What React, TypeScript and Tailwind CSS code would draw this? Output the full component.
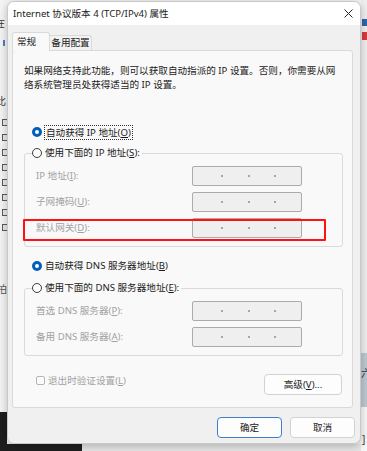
import React from 'react';

const dimText = 'text-[#a2a2a2]';

const Radio = ({ checked }: { checked?: boolean }) =>
  checked ? (
    <span className="flex h-[10px] w-[10px] shrink-0 items-center justify-center rounded-full bg-[#005fb8]">
      <span className="h-[4px] w-[4px] rounded-full bg-white" />
    </span>
  ) : (
    <span className="h-[10px] w-[10px] shrink-0 rounded-full border border-[#3c3c3c] bg-[#fdfdfd]" />
  );

const IpBox = () => (
  <div className="flex h-[20px] w-[110px] items-center justify-evenly rounded-[2px] border border-[#ababab] bg-[#efefef] pl-[3px]">
    <span className="h-[2px] w-[2px] rounded-full bg-[#8c8c8c]" />
    <span className="h-[2px] w-[2px] rounded-full bg-[#8c8c8c]" />
    <span className="h-[2px] w-[2px] rounded-full bg-[#8c8c8c]" />
  </div>
);

const FieldRow = ({ label }: { label: React.ReactNode }) => (
  <div className="flex h-[20px] items-center">
    <span className={`w-[156px] ${dimText}`}>{label}</span>
    <IpBox />
  </div>
);

const Backdrop = () => (
  <>
    {/* left window sliver */}
    <div className="absolute left-0 top-0 h-full w-[7px] overflow-hidden bg-[#f4f4f4]">
      <span className="absolute left-[-5px] top-[16px] text-[10px] text-[#333]">在</span>
      <span className="absolute left-[3px] top-[40px] h-[6px] w-[2px] bg-[#4a7fc0]" />
      <span className="absolute left-[-4px] top-[94px] text-[10px] text-[#333]">比</span>
      <div className="absolute left-[2px] top-[119px] flex flex-col gap-[8px]">
        {[0, 1, 2, 3, 4, 5, 6, 7].map((i) => (
          <span key={i} className="h-[7px] w-[6px] border border-[#5a5a5a] bg-[#e8e8e8]" />
        ))}
      </div>
      <span className="absolute left-[-3px] top-[282px] text-[10px] text-[#555]">拍</span>
      <div className="absolute left-0 top-[412px] h-[40px] w-full bg-[#1e1e1e]" />
    </div>
    {/* bottom strip under the dialog */}
    <div className="absolute bottom-0 left-0 h-[7px] w-[82px] bg-[#1e1e1e]" />
    <div className="absolute bottom-0 left-[82px] h-[7px] w-[285px] bg-[#e6e6e6]" />
    {/* right window sliver */}
    <div className="absolute right-0 top-0 h-full w-[6px] overflow-hidden bg-[#efefef]">
      <span className="absolute left-[1px] top-[19px] h-[7px] w-[5px] bg-[#2b66b0]" />
      <span className="absolute left-[1px] top-[32px] h-[8px] w-[5px] bg-[#d63b3b]" />
      <div className="absolute left-0 top-[353px] h-[54px] w-full bg-[#bcc8d0]" />
      <span className="absolute left-[0px] top-[366px] text-[10px] text-[#333]">六</span>
      <div className="absolute left-0 top-[407px] h-[44px] w-full bg-[#f7f7f7]" />
      <span className="absolute left-[1px] top-[432px] text-[10px] text-[#444]">]</span>
    </div>
  </>
);

export default function App() {
  return (
    <div className="relative h-[451px] w-[367px] overflow-hidden bg-[#f4f4f4] font-['Noto_Sans','Noto_Sans_CJK_SC',sans-serif] text-[9.6px] leading-[14px] text-[#1b1b1b]">
      <Backdrop />

      <div className="relative ml-[7px] mt-[1px] flex h-[443px] w-[354px] flex-col overflow-hidden rounded-[7px] border border-[#c9c9c9] bg-[#f0f0f0] shadow-[0_2px_8px_rgba(0,0,0,0.25)]">
        {/* title bar */}
        <div className="flex h-[23px] items-center justify-between bg-white pl-[5px] pr-[7px]">
          <span>Internet 协议版本 4 (TCP/IPv4) 属性</span>
          <svg width="9" height="9" viewBox="0 0 9 9" className="text-[#222]">
            <path d="M0.5 0.5 L8.5 8.5 M8.5 0.5 L0.5 8.5" stroke="currentColor" strokeWidth="1" />
          </svg>
        </div>

        {/* tabs */}
        <div className="flex h-[25px] items-end pl-[4px]">
          <div className="relative z-10 flex h-[19px] w-[38px] translate-y-[1px] items-center rounded-t-[3px] border border-b-0 border-[#d9d9d9] bg-[#f9f9f9] pl-[4px]">
            常规
          </div>
          <div className="flex h-[15px] w-[42px] items-center justify-center rounded-tr-[3px] border-r border-t border-[#d9d9d9] bg-[#f2f2f2]">
            备用配置
          </div>
        </div>

        {/* panel */}
        <div className="ml-[4px] flex h-[358px] w-[341px] flex-col rounded-[3px] border border-[#d9d9d9] bg-[#f9f9f9]">
          <p className="mt-[13px] whitespace-nowrap pl-[11px]">
            如果网络支持此功能，则可以获取自动指派的 IP 设置。否则，你需要从网
            <br />
            络系统管理员处获得适当的 IP 设置。
          </p>

          <div className="mt-[32px] flex h-[16px] items-center pl-[19px]">
            <Radio checked />
            <span className="ml-[2px] border border-dotted border-[#333] px-[1px] leading-[13px]">
              自动获得 IP 地址(<u>O</u>)
            </span>
          </div>

          <div className="relative ml-[11px] mt-[13px] h-[94px] w-[319px] rounded-[3px] border border-[#dadada]">
            <div className="absolute left-[7px] top-[-9px] flex h-[16px] items-center bg-[#f9f9f9] pr-[2px]">
              <Radio />
              <span className="ml-[3px]">
                使用下面的 IP 地址(<u>S</u>):
              </span>
            </div>
            <div className="flex flex-col gap-[6px] pl-[11px] pt-[12px]">
              <FieldRow label={<>IP 地址(<u>I</u>):</>} />
              <FieldRow label={<>子网掩码(<u>U</u>):</>} />
              <FieldRow label={<>默认网关(<u>D</u>):</>} />
            </div>
            <div className="absolute left-[-2px] top-[65px] h-[22px] w-[303px] rounded-[1px] border-2 border-[#ff1212]" />
          </div>

          <div className="mt-[11px] flex h-[16px] items-center pl-[19px]">
            <Radio checked />
            <span className="ml-[3px]">
              自动获得 DNS 服务器地址(<u>B</u>)
            </span>
          </div>

          <div className="relative ml-[11px] mt-[14px] h-[68px] w-[319px] rounded-[3px] border border-[#dadada]">
            <div className="absolute left-[7px] top-[-9px] flex h-[16px] items-center bg-[#f9f9f9] pr-[2px]">
              <Radio />
              <span className="ml-[3px]">
                使用下面的 DNS 服务器地址(<u>E</u>):
              </span>
            </div>
            <div className="flex flex-col gap-[6px] pl-[11px] pt-[12px]">
              <FieldRow label={<>首选 DNS 服务器(<u>P</u>):</>} />
              <FieldRow label={<>备用 DNS 服务器(<u>A</u>):</>} />
            </div>
          </div>

          <div className="mt-[18px] flex items-start justify-between pl-[23px] pr-[10px]">
            <div className={`mt-[2px] flex h-[9px] items-center ${dimText}`}>
              <span className="h-[9px] w-[9px] rounded-[2px] border border-[#b5b5b5] bg-[#fbfbfb]" />
              <span className="ml-[3px]">
                退出时验证设置(<u>L</u>)
              </span>
            </div>
            <button className="flex h-[21px] w-[78px] items-center justify-center rounded-[4px] border border-[#d2d2d2] bg-[#fdfdfd]">
              高级(<u>V</u>)...
            </button>
          </div>
        </div>

        {/* footer buttons */}
        <div className="mt-[9px] flex justify-end gap-[8px] pr-[5px]">
          <button className="flex h-[21px] w-[65px] items-center justify-center rounded-[4px] border border-[#3f7fc9] bg-[#fdfdfd]">
            确定
          </button>
          <button className="flex h-[21px] w-[65px] items-center justify-center rounded-[4px] border border-[#d2d2d2] bg-[#fdfdfd]">
            取消
          </button>
        </div>
      </div>
    </div>
  );
}
